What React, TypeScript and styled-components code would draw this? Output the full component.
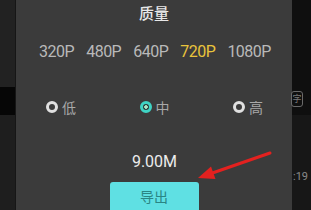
import React from "react";
import styled, { createGlobalStyle } from "styled-components";

const GlobalStyle = createGlobalStyle`
  html, body {
    margin: 0;
    padding: 0;
    background: #181818;
  }
  body {
    font-family: Roboto, "Noto Sans CJK SC", sans-serif;
  }
`;

const RESOLUTIONS = ["320P", "480P", "640P", "720P", "1080P"];
const QUALITIES = ["低", "中", "高"];

const Screen = styled.div`
  position: relative;
  display: flex;
  width: 311px;
  height: 210px;
  overflow: hidden;
`;

const LeftEdge = styled.div`
  width: 16px;
  display: flex;
  flex-direction: column;
  background: #202020;
  border-right: 1px solid #161616;
  box-sizing: border-box;
`;

const EdgeBlock = styled.div<{ $h: number; $bg: string }>`
  height: ${(p) => p.$h}px;
  background: ${(p) => p.$bg};
`;

const RightEdge = styled.div`
  flex: 1;
  display: flex;
  flex-direction: column;
  background: linear-gradient(#0f0f0f 0 115px, #171717 115px);
`;

const EdgeIcon = styled.div`
  margin: 91px 0 0 -1px;
  width: 10px;
  height: 14px;
  border: 1px solid #6a6a6a;
  border-radius: 3px;
  color: #7a7a7a;
  font-size: 9px;
  line-height: 14px;
  text-align: center;
  overflow: hidden;
  font-family: "Noto Sans CJK SC", sans-serif;
`;

const EdgeTime = styled.div`
  margin-top: 63px;
  padding-left: 1px;
  color: #8a8a8a;
  font-size: 11px;
  font-family: Roboto, sans-serif;
`;

const Panel = styled.div`
  width: 276px;
  flex-shrink: 0;
  background: #3b3b3b;
  display: flex;
  flex-direction: column;
  align-items: stretch;
`;

const Title = styled.div`
  padding-top: 4px;
  line-height: 18px;
  font-size: 15px;
  text-align: center;
  color: #e8e8e8;
  font-family: "Noto Sans CJK SC", sans-serif;
  font-weight: 500;
`;

const ResRow = styled.div`
  margin-top: 20px;
  display: flex;
  justify-content: center;
  gap: 12px;
  padding-left: 2px;
  line-height: 20px;
`;

const ResItem = styled.span<{ $active?: boolean }>`
  font-size: 16px;
  letter-spacing: -0.5px;
  color: ${(p) => (p.$active ? "#e9c43c" : "#b9b9b9")};
`;

const Divider = styled.div`
  margin: 10px 18px 0;
  height: 1px;
  background: #454545;
`;

const RadioRow = styled.div`
  margin-top: 25px;
  display: flex;
  justify-content: space-between;
  padding: 0 29px 0 30px;
  line-height: 20px;
`;

const RadioItem = styled.div`
  display: flex;
  align-items: center;
  gap: 4px;
`;

const RadioDot = styled.span<{ $checked?: boolean }>`
  width: 12px;
  height: 12px;
  box-sizing: border-box;
  border-radius: 50%;
  border: 3px solid ${(p) => (p.$checked ? "#3fd4c4" : "#e0e0e0")};
  background: ${(p) =>
    p.$checked
      ? "radial-gradient(circle, #a8e8c8 0 1.5px, #2e3a38 2.1px)"
      : "#3b3b3b"};
`;

const RadioLabel = styled.span`
  font-size: 14px;
  color: #a8a8a8;
  font-family: "Noto Sans CJK SC", sans-serif;
`;

const Size = styled.div`
  margin-top: 35px;
  text-align: center;
  font-size: 16px;
  line-height: 20px;
  color: #ececec;
  padding-left: 1px;
`;

const ExportButton = styled.button`
  align-self: center;
  margin-top: 10px;
  width: 89px;
  height: 32px;
  border: none;
  border-radius: 3px;
  background: #5fe0e3;
  color: #2a8584;
  font-size: 14px;
  line-height: 28px;
  padding: 0 0 4px;
  font-family: "Noto Sans CJK SC", sans-serif;
`;

const Annotation = styled.svg`
  position: absolute;
  left: 0;
  top: 0;
  pointer-events: none;
`;

export default function App() {
  return (
    <>
      <GlobalStyle />
      <Screen>
        <LeftEdge>
          <EdgeBlock $h={87} $bg="#222222" />
          <EdgeBlock $h={28} $bg="#060606" />
          <EdgeBlock $h={95} $bg="#1e1e1e" />
        </LeftEdge>
        <Panel>
          <Title>质量</Title>
          <ResRow>
            {RESOLUTIONS.map((r) => (
              <ResItem key={r} $active={r === "720P"}>
                {r}
              </ResItem>
            ))}
          </ResRow>
          <Divider />
          <RadioRow>
            {QUALITIES.map((q) => (
              <RadioItem key={q}>
                <RadioDot $checked={q === "中"} />
                <RadioLabel>{q}</RadioLabel>
              </RadioItem>
            ))}
          </RadioRow>
          <Size>9.00M</Size>
          <ExportButton>导出</ExportButton>
        </Panel>
        <RightEdge>
          <EdgeIcon>字</EdgeIcon>
          <EdgeTime>:19</EdgeTime>
        </RightEdge>
        <Annotation width="311" height="210" viewBox="0 0 311 210">
          <line x1="270" y1="153" x2="211" y2="173.5" stroke="#e3211f" strokeWidth="3" strokeLinecap="round" />
          <polygon points="198,178 215.5,179 211,166.5" fill="#e3211f" />
        </Annotation>
      </Screen>
    </>
  );
}
